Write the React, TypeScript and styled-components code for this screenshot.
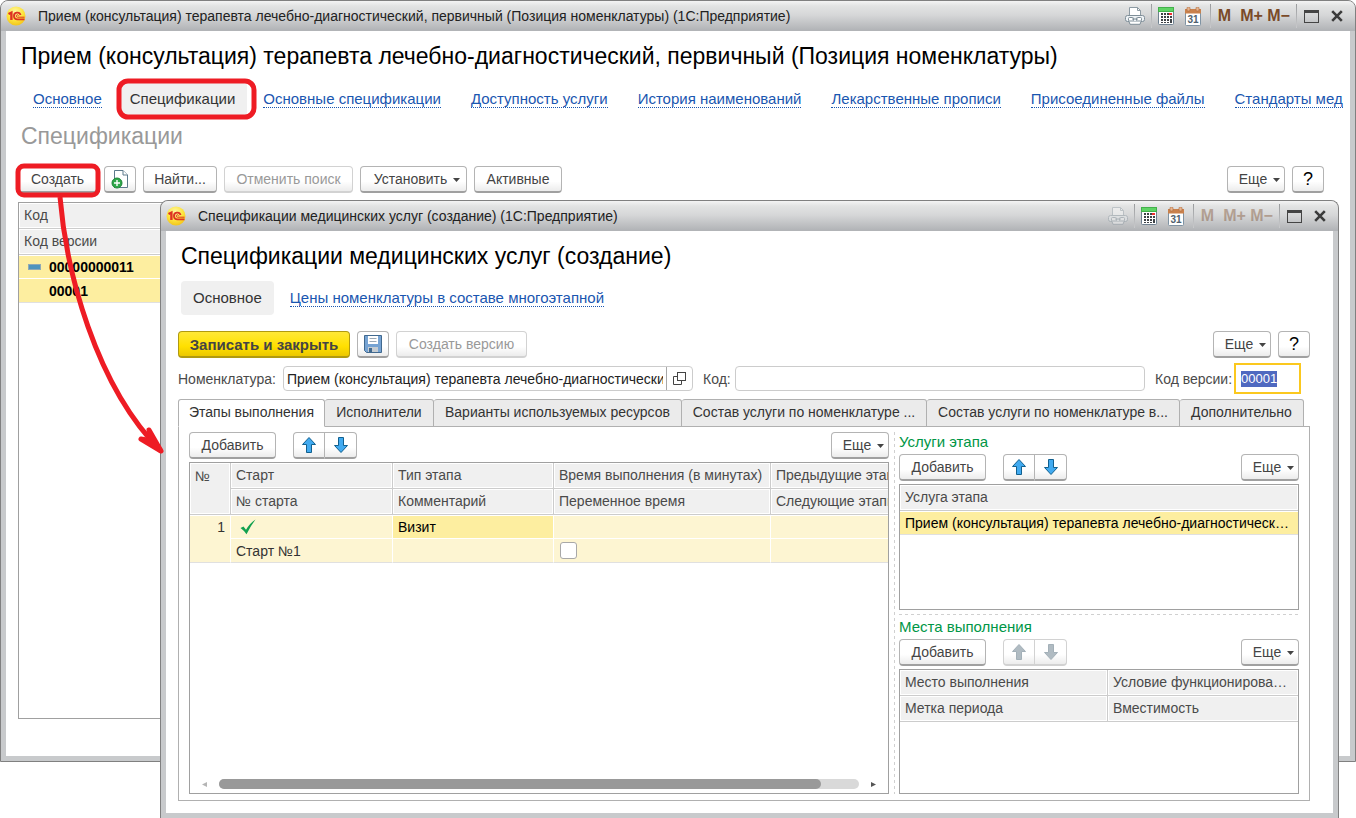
import React from "react";
import styled, { createGlobalStyle, css } from "styled-components";

const GlobalStyle = createGlobalStyle`
  *, *::before, *::after { box-sizing: border-box; }
  body { margin: 0; background: #fff; }
  body, button, input, table { font-family: "Liberation Sans", Arial, sans-serif; font-size: 14px; }
`;

const Desktop = styled.div`
  position: relative;
  min-height: 100vh;
  overflow: hidden;
  background: #fff;
  color: #333;
`;

const windowFrame = css`
  position: absolute;
  display: flex;
  flex-direction: column;
  border: 1px solid #808080;
  border-radius: 8px 8px 0 0;
  background: #c8cacc;
  overflow: hidden;
`;

const BackWindow = styled.section`
  ${windowFrame}
  inset: 0 0 56px 0;
`;

const FrontWindow = styled.section`
  ${windowFrame}
  inset: 200px 17px 0 160px;
  border-bottom: 0;
`;

const TitleBar = styled.header`
  display: flex;
  align-items: center;
  flex: none;
  height: 30px;
  padding: 0 6px 0 5px;
  background: linear-gradient(#f4f4f4 0, #e2e3e3 5px, #d6d7d8 14px, #b2b4b7 29px);
  color: #222;
`;

const TitleText = styled.span`
  flex: 1;
  min-width: 0;
  margin-left: 12px;
  white-space: nowrap;
  overflow: hidden;
`;

const TitleButton = styled.button<{ $w: number; $dim?: boolean }>`
  display: flex;
  align-items: center;
  justify-content: center;
  flex: none;
  width: ${(p) => p.$w}px;
  height: 24px;
  padding: 0;
  border: 0;
  background: none;
  color: #7a4a28;
  font-size: 16px;
  font-weight: bold;
  opacity: ${(p) => (p.$dim ? 0.4 : 1)};
`;

const TitleDivider = styled.i`
  flex: none;
  width: 1px;
  height: 24px;
  background: linear-gradient(#999b9d, #c9cacc);
`;

const TitleGap = styled.span`
  flex: none;
  width: 4px;
`;

const WindowBody = styled.div<{ $pad: string }>`
  display: flex;
  flex-direction: column;
  flex: 1;
  min-height: 0;
  margin: 0 5px 5px;
  padding: ${(p) => p.$pad};
  background: #fff;
  overflow: hidden;
`;

const PageTitle = styled.h1`
  margin: 0 0 0 3px;
  color: #000;
  font-size: 23px;
  font-weight: normal;
  line-height: 26px;
  white-space: nowrap;
`;

const SubTitle = styled.h2`
  margin: 0 0 0 3px;
  color: #999;
  font-size: 23px;
  font-weight: normal;
  line-height: 26px;
`;

const Nav = styled.nav`
  display: flex;
  align-items: center;
  height: 34px;
  margin-left: 3px;
  white-space: nowrap;
`;

const FrontNav = styled(Nav)`
  margin-top: 12px;
`;

const BackNav = styled(Nav)`
  margin: 13px 0 7px 15px;
`;

const NavLink = styled.a<{ $gap: number }>`
  flex: none;
  margin-right: ${(p) => p.$gap}px;
  border-bottom: 1px dotted #1a56b0;
  color: #1a56b0;
  font-size: 15px;
  line-height: 16px;
  text-decoration: none;
`;

const NavCurrent = styled.a<{ $gap: number }>`
  flex: none;
  margin-right: ${(p) => p.$gap}px;
  padding: 0 12px;
  border-radius: 4px;
  background: #f0f0f0;
  color: #333;
  font-size: 15px;
  line-height: 34px;
  text-decoration: none;
`;

const Toolbar = styled.div`
  display: flex;
  align-items: center;
  flex: none;
  gap: 7px;
  height: 27px;
`;

const Spacer = styled.span`
  flex: 1;
`;

const Button = styled.button<{ $w: number; $primary?: boolean; $menu?: boolean }>`
  display: flex;
  align-items: center;
  justify-content: center;
  flex: none;
  gap: 6px;
  width: ${(p) => p.$w}px;
  height: 27px;
  padding: ${(p) => (p.$menu ? "0 0 0 7px" : "0")};
  border: 1px solid #b4b4b4;
  border-bottom: 2px solid #a0a0a0;
  border-radius: 4px;
  background: linear-gradient(#fff 60%, #ececec);
  color: #444;
  white-space: nowrap;
  &:disabled {
    border-color: #d2d2d2;
    color: #999;
  }
  & > svg { flex: none; }
  ${(p) =>
    p.$primary &&
    css`
      border-color: #b09a10;
      background: linear-gradient(#ffe838, #ffe000 60%, #ecc800);
      font-size: 15px;
      font-weight: bold;
    `}
`;

const HelpMark = styled.span`
  color: #000;
  font-size: 18px;
`;

const ButtonPair = styled.div`
  display: flex;
  margin-left: 10px;
  & > button:first-child { border-radius: 4px 0 0 4px; }
  & > button:last-child { border-radius: 0 4px 4px 0; border-left: 0; }
`;

const TableBox = styled.div`
  position: relative;
  flex: 1;
  min-height: 0;
  border: 1px solid #a0a0a0;
  background: #fff;
  overflow: hidden;
`;

const Table = styled.table<{ $w?: string }>`
  width: ${(p) => p.$w ?? "100%"};
  border-collapse: separate;
  border-spacing: 0;
  table-layout: fixed;
  & tbody tr:first-child td { box-shadow: inset 0 1px 0 #fff; }
`;

const cell = css`
  padding: 0 5px;
  border-right: 1px solid #ccc;
  border-bottom: 1px solid #ccc;
  text-align: left;
  vertical-align: middle;
  white-space: nowrap;
  overflow: hidden;
  text-overflow: ellipsis;
  &:last-child { border-right: 0; }
`;

const Th = styled.th<{ $tall?: boolean }>`
  ${cell}
  height: 26px;
  padding-bottom: 1px;
  background: #f0f0f0;
  box-shadow: inset 0 0 0 1px #fff;
  color: #4a4a4a;
  font-weight: normal;
  ${(p) => p.$tall && css`
    padding-top: 5px;
    vertical-align: top;
  `}
`;

const Td = styled.td<{ $active?: boolean; $bold?: boolean; $number?: boolean; $last?: boolean }>`
  ${cell}
  height: 24px;
  border-color: #fff;
  border-bottom-color: ${(p) => (p.$last ? "#e0e0e0" : "#fff")};
  background: ${(p) => (p.$active ? "#fdeea0" : "#fdf5d2")};
  color: ${(p) => (p.$active ? "#000" : "#333")};
  font-weight: ${(p) => (p.$bold ? "bold" : "normal")};
  ${(p) => p.$number && css`
    padding-top: 4px;
    text-align: right;
    vertical-align: top;
  `}
`;

const CodeCell = styled.div`
  display: flex;
  align-items: center;
  gap: 8px;
  padding-left: 4px;
  & > i {
    width: 13px;
    height: 6px;
  }
`;

const CollapseMark = styled.i`
  border: 1px solid #8fa9b5;
  background: #4f94bd;
`;

const FormRow = styled.div`
  display: flex;
  align-items: center;
  flex: none;
  height: 31px;
  margin: 5px 0;
  color: #4a4a4a;
`;

const Label = styled.label<{ $w: number }>`
  flex: none;
  width: ${(p) => p.$w}px;
  white-space: nowrap;
`;

const FieldBox = styled.div`
  display: flex;
  flex: 1;
  min-width: 0;
  height: 25px;
  margin-right: 10px;
  border: 1px solid #ccc;
  border-radius: 4px;
  background: #fff;
`;

const FieldInput = styled.input`
  flex: 1;
  min-width: 0;
  margin: 0 3px;
  padding: 0;
  border: 0;
  outline: 0;
  background: none;
  color: #222;
`;

const OpenButton = styled.button`
  display: flex;
  align-items: center;
  justify-content: center;
  width: 26px;
  padding: 0;
  border: 0;
  border-left: 1px solid #a8a8a8;
  background: none;
`;

const FocusedField = styled.div`
  display: flex;
  align-items: center;
  flex: none;
  width: 67px;
  height: 31px;
  margin-right: 9px;
  padding: 0 5px;
  border: 2px solid #fbc81e;
`;

const SelectedInput = styled.input`
  width: 36px;
  height: 16px;
  padding: 0;
  border: 0;
  outline: 0;
  background: #4f69c0;
  color: #fff;
  font-size: 13px;
`;

const Tabs = styled.div`
  display: flex;
  flex: none;
  height: 28px;
  margin-bottom: -1px;
`;

const Tab = styled.button<{ $w: number; $current?: boolean }>`
  position: relative;
  flex: 0 1 ${(p) => p.$w}px;
  min-width: 0;
  padding: 0 0 2px;
  border: 1px solid #b0b0b0;
  border-left-width: ${(p) => (p.$current ? 1 : 0)}px;
  border-bottom-color: ${(p) => (p.$current ? "#fff" : "#b0b0b0")};
  border-radius: 3px 3px 0 0;
  background: ${(p) => (p.$current ? "#fff" : "#ebebeb")};
  color: #333;
  white-space: nowrap;
`;

const Panel = styled.div`
  display: flex;
  flex: 1;
  min-height: 0;
  padding: 5px 10px 6px;
  border: 1px solid #b0b0b0;
`;

const Column = styled.div<{ $fixed?: boolean }>`
  display: flex;
  flex-direction: column;
  flex: ${(p) => (p.$fixed ? "0 0 400px" : "1 1 0")};
  min-width: 0;
`;

const dash = "#d0d0d0 0 3px, transparent 3px 6px";

const VerticalSplitter = styled.i`
  flex: none;
  width: 1px;
  margin: 0 4px 0 5px;
  background: repeating-linear-gradient(${dash});
`;

const HorizontalSplitter = styled.i`
  flex: none;
  height: 1px;
  margin: 4px 0 2px;
  background: repeating-linear-gradient(90deg, ${dash});
`;

const Section = styled.div`
  display: flex;
  flex-direction: column;
  flex: 1;
  min-height: 0;
`;

const SectionTitle = styled.h3`
  flex: none;
  margin: 0;
  padding-bottom: 2px;
  color: #009646;
  font-size: 15px;
  font-weight: normal;
  line-height: 20px;
`;

const Check = styled.input`
  display: block;
  appearance: none;
  width: 17px;
  height: 17px;
  margin: 0 0 0 1px;
  border: 1px solid #a8a8a8;
  border-radius: 3px;
  background: #fff;
`;

const TickHolder = styled.span`
  display: block;
  padding-left: 4px;
`;

const ScrollBar = styled.div`
  position: absolute;
  right: 0;
  bottom: 4px;
  left: 0;
  display: flex;
  align-items: center;
  height: 10px;
  padding: 0 11px;
  gap: 12px;
`;

const ScrollTrack = styled.div`
  flex: 1;
  height: 10px;
  border-radius: 5px;
  background: #d9d9d9;
`;

const ScrollThumb = styled.div`
  width: 94%;
  height: 10px;
  border-radius: 5px;
  background: #999;
`;

const TableGap = styled.div<{ $wide?: boolean }>`
  flex: none;
  height: ${(p) => (p.$wide ? 9 : 3)}px;
`;

const BackHeader = styled.div`
  flex: none;
  padding-bottom: 17px;
`;

const FrontHeader = styled.div`
  flex: none;
  padding-bottom: 16px;
`;

const BackContent = styled.div`
  display: flex;
  flex-direction: column;
  flex: 1;
  min-height: 0;
  padding-right: 26px;
`;

const Annotations = styled.svg`
  position: absolute;
  top: 0;
  left: 0;
  pointer-events: none;
`;

function Logo() {
  return (
    <svg width="20" height="20" viewBox="0 0 20 20">
      <defs>
        <radialGradient id="sun" cx="45%" cy="30%" r="70%">
          <stop offset="0" stopColor="#fff8a8" />
          <stop offset="0.6" stopColor="#fde43c" />
          <stop offset="1" stopColor="#f3c51a" />
        </radialGradient>
      </defs>
      <circle cx="10" cy="10" r="9.5" fill="url(#sun)" />
      <g fill="none" stroke="#dd3322">
        <path d="M2.5 8 L5.4 6.6 V14" strokeWidth="2.4" />
        <path d="M14.6 9 A3.4 3.4 0 1 0 11.4 13.4 H18.5" strokeWidth="1.8" />
        <path d="M12.6 9.6 A1.2 1.2 0 1 0 11.6 11.2 H18.5" strokeWidth="1" />
      </g>
    </svg>
  );
}

function PrinterIcon() {
  return (
    <svg width="20" height="18" viewBox="0 0 20 18">
      <path d="M4.5 9 V0.5 H12.5 L15.5 3.5 V9" fill="#fff" stroke="#8d9aa3" />
      <path d="M12.5 0.5 V3.5 H15.5" fill="none" stroke="#8d9aa3" />
      <rect x="0.5" y="8.5" width="19" height="6" rx="2" fill="#eef2f5" stroke="#7f8e98" />
      <rect x="3.5" y="10.5" width="5" height="3.5" rx="1" fill="#fff" stroke="#7f8e98" />
      <rect x="11.5" y="10.5" width="5" height="3.5" rx="1" fill="#fff" stroke="#7f8e98" />
      <path d="M7 12 H13" stroke="#7f8e98" />
      <path d="M4 14.5 L5 17.3 H15 L16 14.5" fill="#fff" stroke="#7f8e98" />
    </svg>
  );
}

function CalculatorIcon() {
  return (
    <svg width="16" height="18" viewBox="0 0 16 18">
      <rect x="0.5" y="0.5" width="15" height="17" rx="1" fill="#fff" stroke="#6f8190" />
      <rect x="0" y="0" width="16" height="5" fill="#43b14b" />
      <rect x="1" y="1" width="14" height="3" fill="#5fd465" />
      <g fill="#3e4246">
        {[6, 9, 12, 15].map((y) =>
          [3, 6, 9].map((x) => <rect key={`${x}-${y}`} x={x} y={y} width="2" height={y === 15 ? 1 : 2} />)
        )}
        <rect x="12" y="9" width="2" height="2" />
        <rect x="12" y="12" width="2" height="4" />
      </g>
      <rect x="11" y="6" width="3" height="2" fill="#f03030" />
    </svg>
  );
}

function CalendarIcon() {
  return (
    <svg width="16" height="19" viewBox="0 0 16 19">
      <rect x="0.5" y="2.5" width="15" height="16" rx="1" fill="#fff" stroke="#7f93a3" />
      <path d="M0 6.5 V2 H16 V6.5 Z" fill="#c9814c" />
      <rect x="2" y="0" width="3" height="4" rx="1" fill="#e9b48e" stroke="#a8693c" strokeWidth="0.6" />
      <rect x="11" y="0" width="3" height="4" rx="1" fill="#e9b48e" stroke="#a8693c" strokeWidth="0.6" />
      <text x="8" y="16" textAnchor="middle" fontSize="10" fontWeight="bold" fontFamily="Liberation Sans" fill="#4f5f6d">31</text>
    </svg>
  );
}

function MaximizeIcon() {
  return (
    <svg width="15" height="13" viewBox="0 0 15 13">
      <rect x="0.5" y="0.5" width="14" height="12" fill="none" stroke="#444" />
      <rect x="0" y="0" width="15" height="3" fill="#444" />
    </svg>
  );
}

function CloseIcon() {
  return (
    <svg width="12" height="12" viewBox="0 0 12 12">
      <path d="M1.2 1.2 L10.8 10.8 M10.8 1.2 L1.2 10.8" stroke="#3c3c3c" strokeWidth="2.6" />
    </svg>
  );
}

function Caret() {
  return (
    <svg width="7" height="6" viewBox="0 0 7 6">
      <path d="M0 2 H7 L3.5 6 Z" fill="#444" />
    </svg>
  );
}

function Arrow({ down, off }: { down?: boolean; off?: boolean }) {
  return (
    <svg width="16" height="18" viewBox="0 0 16 18">
      <path
        d={down ? "M5.5 1.5 H10.5 V9.5 H14.5 L8 16.5 L1.5 9.5 H5.5 Z" : "M5.5 16.5 H10.5 V8.5 H14.5 L8 1.5 L1.5 8.5 H5.5 Z"}
        fill={off ? "#b0bbc2" : "#41aaf0"}
        stroke={off ? "#a3b0b8" : "#11608f"}
      />
    </svg>
  );
}

function CopyIcon() {
  return (
    <svg width="18" height="20" viewBox="0 0 18 20">
      <path d="M3.5 19 V1.5 H12 L16.5 6 V18.5 H8" fill="#fff" stroke="#5d7a8c" />
      <path d="M12 1.5 V6 H16.5" fill="#fff" stroke="#5d7a8c" />
      <circle cx="6" cy="14" r="5" fill="#2ea84a" stroke="#1b8436" />
      <path d="M6 11 V17 M3 14 H9" stroke="#fff" strokeWidth="1.4" />
    </svg>
  );
}

function SaveIcon() {
  return (
    <svg width="18" height="18" viewBox="0 0 18 18">
      <path d="M0.5 0.5 H17.5 V17.5 H2.5 L0.5 15.5 Z" fill="#76a3d3" stroke="#41698f" />
      <rect x="4" y="1" width="10" height="8" fill="#fff" />
      <path d="M5.5 3.5 H12.5 M5.5 6.5 H12.5" stroke="#9aa8b5" />
      <rect x="4" y="12" width="10" height="5" fill="#c5ccd2" />
      <rect x="5" y="13" width="3" height="4" fill="#41698f" />
    </svg>
  );
}

function OpenIcon() {
  return (
    <svg width="13" height="13" viewBox="0 0 13 13" fill="none" stroke="#444">
      <rect x="4.5" y="0.5" width="8" height="8" />
      <path d="M4.5 4.5 H0.5 V12.5 H8.5 V8.5" />
    </svg>
  );
}

function TickIcon() {
  return (
    <svg width="16" height="16" viewBox="0 0 16 16" display="block">
      <path d="M0.5 9 L3.5 7.5 L6 10.8 Q10 4 15.5 0.5 Q10.5 7 6.5 15.2 Q4 11.5 0.5 9 Z" fill="#12a150" />
    </svg>
  );
}

function ScrollArrow({ right }: { right?: boolean }) {
  return (
    <svg width="6" height="5" viewBox="0 0 6 5">
      <path d={right ? "M0 0 L5 2.5 L0 5 Z" : "M6 0 L1 2.5 L6 5 Z"} fill={right ? "#555" : "#b5b5b5"} />
    </svg>
  );
}

function Title({ text, dim }: { text: string; dim?: boolean }) {
  return (
    <TitleBar>
      <Logo />
      <TitleText>{text}</TitleText>
      <TitleButton $w={33} $dim={dim} aria-label="Печать"><PrinterIcon /></TitleButton>
      <TitleDivider />
      <TitleButton $w={27} aria-label="Калькулятор"><CalculatorIcon /></TitleButton>
      <TitleButton $w={27} aria-label="Календарь"><CalendarIcon /></TitleButton>
      <TitleGap />
      <TitleDivider />
      <TitleButton $w={27} $dim={dim}>M</TitleButton>
      <TitleButton $w={27} $dim={dim}>M+</TitleButton>
      <TitleButton $w={27} $dim={dim}>M−</TitleButton>
      <TitleGap />
      <TitleDivider />
      <TitleButton $w={28} aria-label="Развернуть"><MaximizeIcon /></TitleButton>
      <TitleButton $w={24} aria-label="Закрыть"><CloseIcon /></TitleButton>
    </TitleBar>
  );
}

function More() {
  return <Button $w={58} $menu>Еще <Caret /></Button>;
}

function Help() {
  return <Button $w={32}><HelpMark>?</HelpMark></Button>;
}

function ListToolbar({ off }: { off?: boolean }) {
  return (
    <Toolbar>
      <Button $w={87}>Добавить</Button>
      <ButtonPair>
        <Button $w={32} disabled={off} aria-label="Вверх"><Arrow off={off} /></Button>
        <Button $w={32} disabled={off} aria-label="Вниз"><Arrow down off={off} /></Button>
      </ButtonPair>
      <Spacer />
      <More />
    </Toolbar>
  );
}

export default function App() {
  return (
    <Desktop>
      <GlobalStyle />

      <BackWindow>
        <Title text="Прием (консультация) терапевта лечебно-диагностический, первичный (Позиция номенклатуры) (1С:Предприятие)" />
        <WindowBody $pad="12px 0 37px 12px">
          <BackHeader>
            <PageTitle>Прием (консультация) терапевта лечебно-диагностический, первичный (Позиция номенклатуры)</PageTitle>
            <BackNav>
              <NavLink href="#main" $gap={16}>Основное</NavLink>
              <NavCurrent href="#specs" $gap={16}>Спецификации</NavCurrent>
              <NavLink href="#base" $gap={30}>Основные спецификации</NavLink>
              <NavLink href="#access" $gap={30}>Доступность услуги</NavLink>
              <NavLink href="#history" $gap={30}>История наименований</NavLink>
              <NavLink href="#drugs" $gap={30}>Лекарственные прописи</NavLink>
              <NavLink href="#files" $gap={30}>Присоединенные файлы</NavLink>
              <NavLink href="#standards" $gap={0}>Стандарты мед</NavLink>
            </BackNav>
            <SubTitle>Спецификации</SubTitle>
          </BackHeader>
          <BackContent>
            <Toolbar>
              <Button $w={79}>Создать</Button>
              <Button $w={32} aria-label="Скопировать"><CopyIcon /></Button>
              <Button $w={74}>Найти...</Button>
              <Button $w={129} disabled>Отменить поиск</Button>
              <Button $w={107} $menu>Установить <Caret /></Button>
              <Button $w={88}>Активные</Button>
              <Spacer />
              <More />
              <Help />
            </Toolbar>
            <TableGap $wide />
            <TableBox>
              <Table>
                <thead>
                  <tr><Th>Код</Th></tr>
                  <tr><Th>Код версии</Th></tr>
                </thead>
                <tbody>
                  <tr><Td $active $bold><CodeCell><CollapseMark />00000000011</CodeCell></Td></tr>
                  <tr><Td $active $bold $last><CodeCell><i />00001</CodeCell></Td></tr>
                </tbody>
              </Table>
            </TableBox>
          </BackContent>
        </WindowBody>
      </BackWindow>

      <FrontWindow>
        <Title dim text="Спецификации медицинских услуг (создание) (1С:Предприятие)" />
        <WindowBody $pad="12px 23px 12px 12px">
          <FrontHeader>
            <PageTitle>Спецификации медицинских услуг (создание)</PageTitle>
            <FrontNav>
              <NavCurrent href="#spec-main" $gap={16}>Основное</NavCurrent>
              <NavLink href="#prices" $gap={0}>Цены номенклатуры в составе многоэтапной</NavLink>
            </FrontNav>
          </FrontHeader>
          <Toolbar>
            <Button $w={172} $primary>Записать и закрыть</Button>
            <Button $w={32} aria-label="Записать"><SaveIcon /></Button>
            <Button $w={131} disabled>Создать версию</Button>
            <Spacer />
            <More />
            <Help />
          </Toolbar>
          <FormRow>
            <Label htmlFor="item" $w={105}>Номенклатура:</Label>
            <FieldBox>
              <FieldInput id="item" defaultValue="Прием (консультация) терапевта лечебно-диагностический, первичный" />
              <OpenButton aria-label="Открыть"><OpenIcon /></OpenButton>
            </FieldBox>
            <Label htmlFor="code" $w={32}>Код:</Label>
            <FieldBox><FieldInput id="code" defaultValue="" /></FieldBox>
            <Label htmlFor="version" $w={79}>Код версии:</Label>
            <FocusedField><SelectedInput id="version" defaultValue="00001" /></FocusedField>
          </FormRow>
          <Tabs>
            <Tab $w={147} $current>Этапы выполнения</Tab>
            <Tab $w={109}>Исполнители</Tab>
            <Tab $w={248}>Варианты используемых ресурсов</Tab>
            <Tab $w={245}>Состав услуги по номенклатуре ...</Tab>
            <Tab $w={253}>Состав услуги по номенклатуре в...</Tab>
            <Tab $w={124}>Дополнительно</Tab>
          </Tabs>
          <Panel>
            <Column>
              <ListToolbar />
              <TableGap />
              <TableBox>
                <Table $w="780px">
                  <colgroup>
                    <col width="41" />
                    <col width="162" />
                    <col width="161" />
                    <col width="217" />
                    <col />
                  </colgroup>
                  <thead>
                    <tr>
                      <Th rowSpan={2} $tall>№</Th>
                      <Th>Старт</Th>
                      <Th>Тип этапа</Th>
                      <Th>Время выполнения (в минутах)</Th>
                      <Th>Предыдущие этапы</Th>
                    </tr>
                    <tr>
                      <Th>№ старта</Th>
                      <Th>Комментарий</Th>
                      <Th>Переменное время</Th>
                      <Th>Следующие этапы</Th>
                    </tr>
                  </thead>
                  <tbody>
                    <tr>
                      <Td rowSpan={2} $number $last>1</Td>
                      <Td><TickHolder><TickIcon /></TickHolder></Td>
                      <Td $active>Визит</Td>
                      <Td />
                      <Td />
                    </tr>
                    <tr>
                      <Td $last>Старт №1</Td>
                      <Td $last />
                      <Td $last><Check type="checkbox" aria-label="Переменное время" /></Td>
                      <Td $last />
                    </tr>
                  </tbody>
                </Table>
                <ScrollBar>
                  <ScrollArrow />
                  <ScrollTrack><ScrollThumb /></ScrollTrack>
                  <ScrollArrow right />
                </ScrollBar>
              </TableBox>
            </Column>
            <VerticalSplitter />
            <Column $fixed>
              <Section>
                <SectionTitle>Услуги этапа</SectionTitle>
                <ListToolbar />
                <TableGap />
                <TableBox>
                  <Table>
                    <thead><tr><Th>Услуга этапа</Th></tr></thead>
                    <tbody>
                      <tr><Td $active $last>Прием (консультация) терапевта лечебно-диагностический, первичный</Td></tr>
                    </tbody>
                  </Table>
                </TableBox>
              </Section>
              <HorizontalSplitter />
              <Section>
                <SectionTitle>Места выполнения</SectionTitle>
                <ListToolbar off />
                <TableGap />
                <TableBox>
                  <Table>
                    <colgroup>
                      <col width="208" />
                      <col />
                    </colgroup>
                    <thead>
                      <tr><Th>Место выполнения</Th><Th>Условие функционирования</Th></tr>
                      <tr><Th>Метка периода</Th><Th>Вместимость</Th></tr>
                    </thead>
                  </Table>
                </TableBox>
              </Section>
            </Column>
          </Panel>
        </WindowBody>
      </FrontWindow>

      <Annotations width="200" height="470" viewBox="0 0 200 470" overflow="visible" fill="none" stroke="#ee1c24" strokeWidth="5">
        <rect x="119" y="81" width="135" height="36" rx="9" />
        <rect x="18" y="166" width="80" height="29" rx="6" />
        <path d="M60 197 C66 270 95 385 161 451" />
        <path d="M149 430 L161 451 L141 439 L152 441 Z" fill="#ee1c24" strokeLinejoin="round" />
      </Annotations>
    </Desktop>
  );
}
